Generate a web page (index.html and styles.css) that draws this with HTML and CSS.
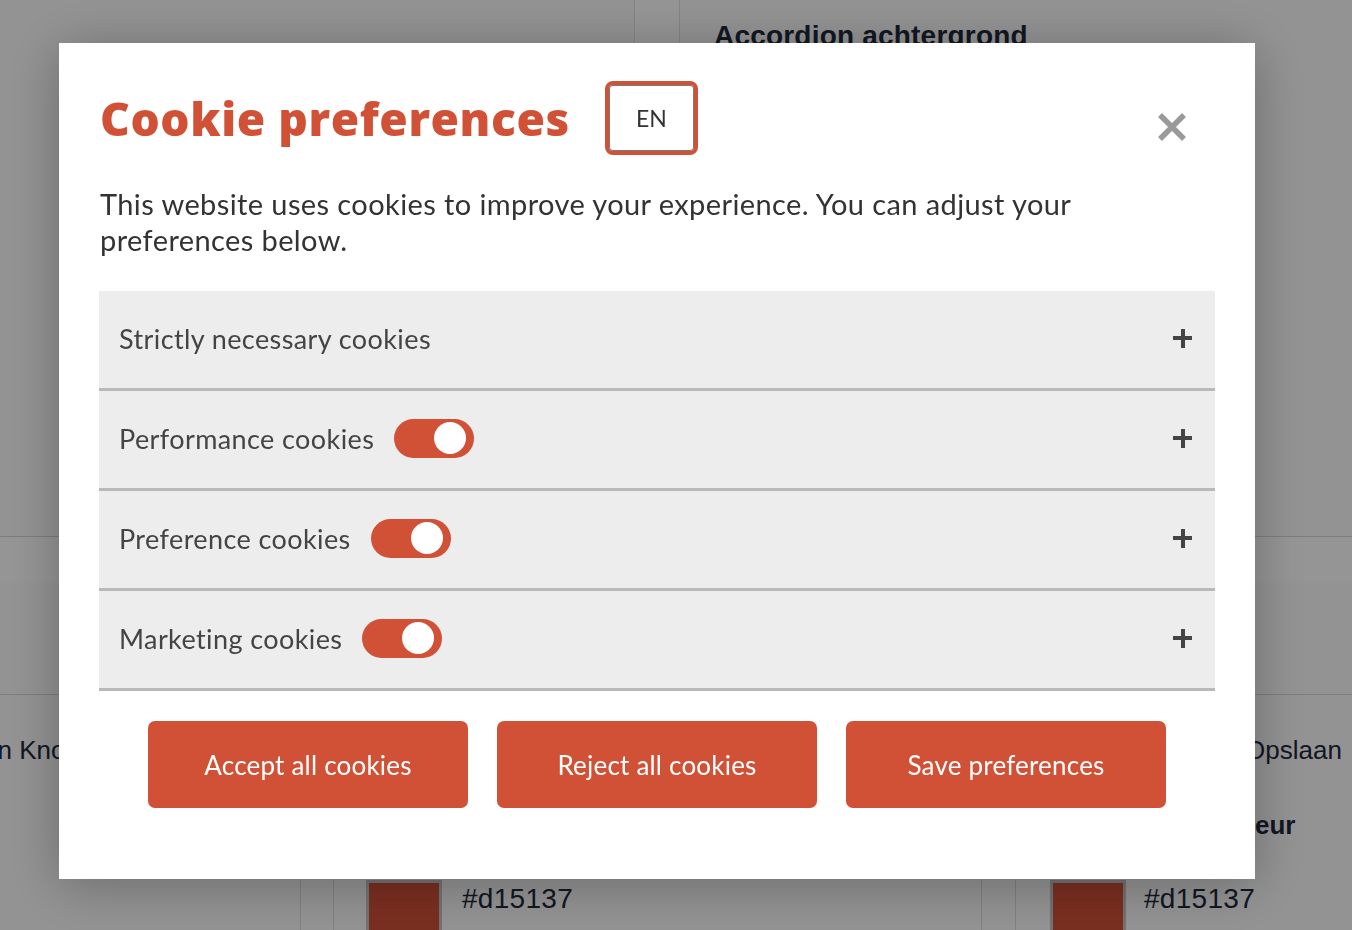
FILE: index.html
```html
<!DOCTYPE html>
<html lang="en">
<head>
	<meta charset="UTF-8">
	<title>Cookie preferences</title>
	<link rel="stylesheet" href="styles.css">
</head>
<body>
	<div class="page">
		<div class="hero">
			<div class="hero-left"></div>
			<div class="hero-gap"></div>
			<div class="hero-right">
				<h3>Accordion achtergrond</h3>
			</div>
		</div>
		<div class="band"></div>
		<div class="blank-row"></div>
		<div class="setting-row">
			<div class="setting-label"><span>Tekstkleur van Knop</span></div>
			<div class="setting-spacer"></div>
			<div class="setting-right">
				<span class="save-link">Opslaan</span>
				<span class="color-title">Kleur</span>
			</div>
		</div>
		<div class="swatch-row">
			<div class="swatch-card">
				<div class="swatch-inner">
					<div class="swatch"></div>
					<span class="swatch-code">#d15137</span>
				</div>
			</div>
			<div class="swatch-card">
				<div class="swatch-inner">
					<div class="swatch"></div>
					<span class="swatch-code">#d15137</span>
				</div>
			</div>
		</div>
	</div>

	<div class="overlay">
		<div class="modal">
			<div class="modal-head">
				<h2 class="modal-title">Cookie preferences</h2>
				<button class="lang-btn">EN</button>
				<button class="close-btn" aria-label="Close">
					<svg width="30" height="30" viewBox="0 0 30 30"><path d="M3 3 L27 27 M27 3 L3 27" stroke="#9a9a9a" stroke-width="5.5" fill="none"/></svg>
				</button>
			</div>
			<p class="intro">This website uses cookies to improve your experience. You can adjust your preferences below.</p>

			<div class="accordion">
				<div class="acc-row">
					<span class="acc-label">Strictly necessary cookies</span>
					<span class="plus"></span>
				</div>
				<div class="acc-row">
					<span class="acc-label">Performance cookies</span>
					<span class="toggle"><i></i></span>
					<span class="plus"></span>
				</div>
				<div class="acc-row">
					<span class="acc-label">Preference cookies</span>
					<span class="toggle"><i></i></span>
					<span class="plus"></span>
				</div>
				<div class="acc-row">
					<span class="acc-label">Marketing cookies</span>
					<span class="toggle"><i></i></span>
					<span class="plus"></span>
				</div>
			</div>

			<div class="actions">
				<button class="btn">Accept all cookies</button>
				<button class="btn">Reject all cookies</button>
				<button class="btn">Save preferences</button>
			</div>
		</div>
	</div>
</body>
</html>
```

FILE: styles.css
```css
*{
	margin:0;
	padding:0;
	box-sizing:border-box;
}

body{
	width:1352px;
	height:930px;
	overflow:hidden;
	background:#fcfcfc;
	font-family:"Liberation Sans", Arial, sans-serif;
	color:#1e293b;
}

/* page behind the dialog */
.hero{
	display:grid;
	grid-template-columns:634px 46px 1fr;
	height:537px;
	border-bottom:1px solid #d6d6d6;
}
.hero-gap{
	background:#fff;
	border-left:1px solid #e2e2e2;
	border-right:1px solid #e2e2e2;
}
.hero-right h3{
	font-size:28px;
	font-weight:700;
	letter-spacing:0.2px;
	padding:20px 34px;
}
.band{
	height:46px;
	background:#fff;
}
.blank-row{
	height:112px;
	border-bottom:1px solid #d6d6d6;
}
.setting-row{
	display:flex;
	height:185px;
}
.setting-label{
	width:80px;
	display:flex;
	justify-content:flex-end;
	white-space:nowrap;
	font-size:26px;
	padding-top:40px;
}
.setting-spacer{
	flex:1;
}
.setting-right{
	width:107px;
	display:flex;
	flex-direction:column;
	font-size:26px;
	padding-top:40px;
	gap:44px;
	white-space:nowrap;
}
.color-title{
	font-weight:700;
	margin-left:-16px;
}
.swatch-row{
	display:flex;
	padding-left:300px;
}
.swatch-card{
	width:681px;
	height:60px;
	border-left:1px solid #dcdcdc;
	padding-left:32px;
}
.swatch-card + .swatch-card{
	width:371px;
	padding-left:33px;
}
.swatch-inner{
	display:flex;
	align-items:flex-start;
	gap:20px;
	height:100%;
	border-left:1px solid #dcdcdc;
	padding-left:32px;
}
.swatch-card + .swatch-card .swatch-inner{
	padding-left:34px;
	gap:18px;
}
.swatch{
	width:76px;
	height:60px;
	background:#d15137;
	border:3px solid #c4c4c4;
	border-bottom:none;
}
.swatch-code{
	font-size:28px;
	padding-top:3px;
	letter-spacing:0.3px;
}

/* dialog */
.overlay{
	position:fixed;
	inset:0;
	background:rgba(0,0,0,0.415);
	padding:43px 0 0 59px;
}
.modal{
	width:1196px;
	height:836px;
	background:#fff;
	padding:38px 40px 0 40px;
	box-shadow:0 6px 50px rgba(0,0,0,0.28);
	font-family:Lato, "Open Sans", sans-serif;
	color:#333;
}
.modal-head{
	display:flex;
	align-items:center;
	height:74px;
}
.modal-title{
	font-family:"Open Sans", Lato, sans-serif;
	font-size:46px;
	font-weight:800;
	color:#d15137;
	letter-spacing:0.6px;
	padding-left:1px;
}
.lang-btn{
	margin-left:35px;
	width:93px;
	height:74px;
	background:#fff;
	border:4px solid #d15137;
	border-radius:8px;
	box-shadow:inset 0 0 0 1px #7a7a7a;
	font-family:Lato, sans-serif;
	font-size:23px;
	color:#333;
}
.close-btn{
	margin-left:auto;
	margin-right:28px;
	margin-top:18px;
	background:none;
	border:none;
	display:flex;
}
.intro{
	margin-top:31px;
	font-size:29px;
	line-height:36px;
	width:1000px;
	letter-spacing:0.4px;
	padding-left:1px;
}
.accordion{
	margin-top:33px;
}
.acc-row{
	display:flex;
	align-items:center;
	gap:20px;
	height:100px;
	padding:0 23px 3px 20px;
	background:#ededed;
	border-bottom:3px solid #b9b9b9;
}
.acc-label{
	font-size:27px;
	color:#444;
	letter-spacing:0.4px;
}
.toggle{
	width:80px;
	height:39px;
	border-radius:20px;
	background:#d15137;
	display:flex;
	align-items:center;
	justify-content:flex-end;
	padding-right:8px;
}
.toggle i{
	width:32px;
	height:32px;
	border-radius:50%;
	background:#fff;
}
.plus{
	margin-left:auto;
	position:relative;
	width:19px;
	height:19px;
}
.plus::before,
.plus::after{
	content:"";
	position:absolute;
	background:#444;
}
.plus::before{
	left:0;
	top:7.5px;
	width:19px;
	height:4px;
}
.plus::after{
	left:7.5px;
	top:0;
	width:4px;
	height:19px;
}
.actions{
	display:flex;
	justify-content:center;
	gap:29px;
	margin-top:30px;
}
.btn{
	width:320px;
	height:87px;
	border:none;
	border-radius:7px;
	background:#d15137;
	color:#fff;
	font-family:Lato, sans-serif;
	font-size:26px;
	letter-spacing:0.2px;
}
```
